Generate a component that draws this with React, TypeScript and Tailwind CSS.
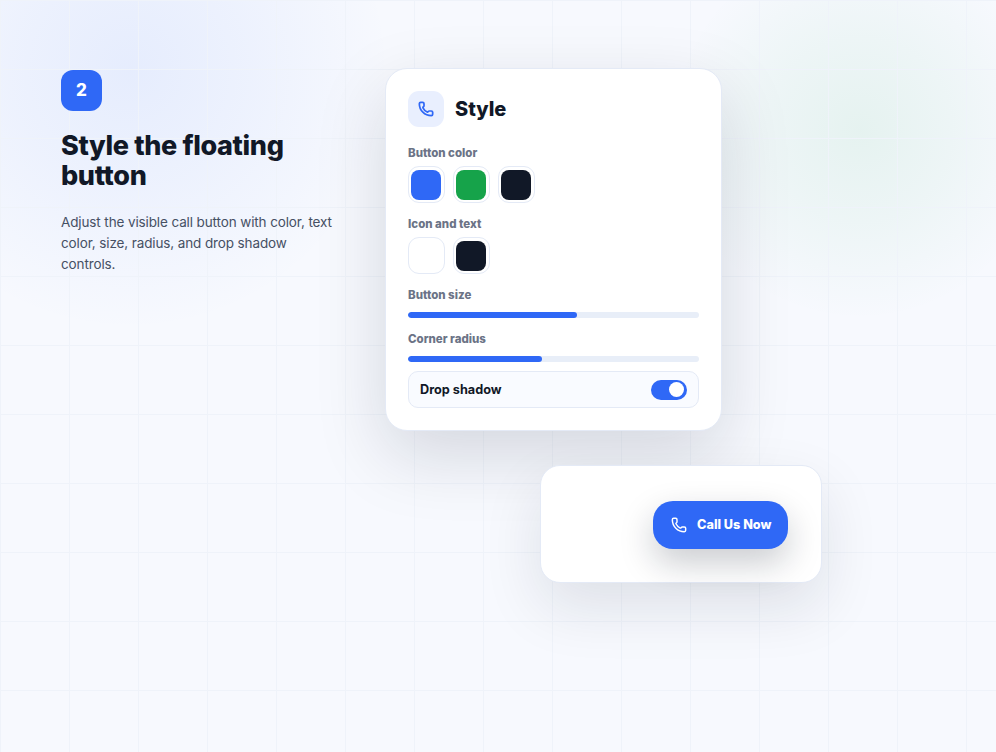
import { Phone } from "lucide-react"

function Swatch({ color }: { color: string }) {
  return (
    <div className="w-[37px] h-[37px] rounded-[11px] bg-white border border-[#e4eaf6] flex items-center justify-center">
      <div className={`w-[30px] h-[30px] rounded-[8px] ${color}`}></div>
    </div>
  )
}

function Slider({ fill }: { fill: string }) {
  return (
    <div className="h-[6px] rounded-full bg-[#e8eef8] overflow-hidden">
      <div className={`h-full rounded-full bg-[#2f68f6] ${fill}`}></div>
    </div>
  )
}

export default function App() {
  return (
    <div className="relative w-[996px] h-[752px] overflow-hidden bg-[#f7f9fe] font-['Inter',sans-serif]">
      {/* Background glows and grid */}
      <div className="absolute left-[-130px] top-[-190px] w-[520px] h-[520px] bg-[radial-gradient(closest-side,rgba(47,104,246,0.085)_0%,rgba(47,104,246,0.05)_45%,rgba(47,104,246,0)_100%)]"></div>
      <div className="absolute left-[670px] top-[-60px] w-[380px] h-[380px] bg-[radial-gradient(closest-side,rgba(22,163,74,0.08)_0%,rgba(22,163,74,0.045)_50%,rgba(22,163,74,0)_100%)]"></div>
      <div className="absolute inset-0 bg-[linear-gradient(to_right,#eff3fa_1px,transparent_1px),linear-gradient(to_bottom,#eff3fa_1px,transparent_1px)] bg-[size:69px_69px]"></div>

      <div className="relative flex items-start pl-[61px] pt-[68px]">
        {/* Step copy */}
        <div className="w-[280px] pt-[2px] shrink-0">
          <div className="w-[41px] h-[41px] rounded-[12px] bg-[#2f68f6] text-white text-[17px] font-extrabold flex items-center justify-center">
            2
          </div>
          <h1 className="mt-[20px] text-[27px] leading-[30px] font-extrabold tracking-[-0.35px] text-[#111827]">
            Style the floating button
          </h1>
          <p className="mt-[21px] w-[280px] text-[13.5px] leading-[21px] tracking-[-0.12px] text-[#465064]">
            Adjust the visible call button with color, text color, size, radius, and drop shadow controls.
          </p>
        </div>

        <div className="ml-[44px] w-[437px] shrink-0">
          {/* Style panel */}
          <div className="w-[337px] h-[363px] rounded-[22px] bg-white border border-[#e4eaf6] shadow-[0_24px_70px_rgba(15,23,42,0.15)] px-[22px] pt-[22px]">
            <div className="flex items-center gap-[11px]">
              <div className="w-[36px] h-[36px] rounded-[11px] bg-[#e9effe] flex items-center justify-center">
                <Phone size={16} className="text-[#2f68f6]" strokeWidth={2.6} />
              </div>
              <h2 className="text-[20px] font-extrabold text-[#111827]">Style</h2>
            </div>

            <div className="mt-[19px] text-[11.5px] leading-[14px] font-extrabold text-[#6b7386]">Button color</div>
            <div className="mt-[6px] -ml-[0.5px] flex gap-[8px]">
              <Swatch color="bg-[#2f68f6]" />
              <Swatch color="bg-[#16a34a]" />
              <Swatch color="bg-[#111827]" />
            </div>

            <div className="mt-[14px] text-[11.5px] leading-[14px] font-extrabold text-[#6b7386]">Icon and text</div>
            <div className="mt-[6px] -ml-[0.5px] flex gap-[8px]">
              <Swatch color="bg-white" />
              <Swatch color="bg-[#111827]" />
            </div>

            <div className="mt-[14px] text-[11.5px] leading-[14px] font-extrabold text-[#6b7386]">Button size</div>
            <div className="mt-[10px]">
              <Slider fill="w-[58%]" />
            </div>

            <div className="mt-[14px] text-[11.5px] leading-[14px] font-extrabold text-[#6b7386]">Corner radius</div>
            <div className="mt-[10px]">
              <Slider fill="w-[46%]" />
            </div>

            <div className="mt-[9px] h-[37px] rounded-[10px] bg-[#f9fbff] border border-[#e4eaf6] px-[11px] flex items-center justify-between">
              <span className="text-[12.7px] font-bold text-[#111827]">Drop shadow</span>
              <div className="w-[36px] h-[20px] rounded-full bg-[#2f68f6] flex items-center justify-end pr-[3px]">
                <div className="w-[15px] h-[15px] rounded-full bg-white"></div>
              </div>
            </div>
          </div>

          {/* Button preview */}
          <div className="mt-[34px] ml-[155px] w-[282px] h-[118px] rounded-[20px] bg-white border border-[#e4eaf6] shadow-[0_24px_60px_rgba(15,23,42,0.11)] flex items-center justify-end pr-[33px] pt-[2px]">
            <div className="w-[135px] h-[48px] rounded-[20px] bg-[#2f68f6] text-white flex items-center pl-[18px] gap-[10px] shadow-[0_14px_34px_rgba(15,23,42,0.22)]">
              <Phone size={16} strokeWidth={2.2} />
              <span className="text-[12.7px] font-extrabold">Call Us Now</span>
            </div>
          </div>
        </div>
      </div>
    </div>
  )
}
